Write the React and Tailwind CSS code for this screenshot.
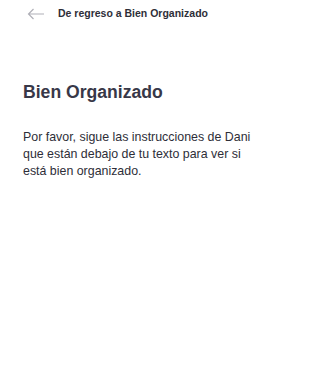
export default function App() {
  return (
    <div className="min-h-screen bg-white font-['Liberation_Sans',Arial,sans-serif]">
      <div className="flex items-center h-[28px] pl-[27px]">
        <svg width="18" height="12" viewBox="0 0 18 12" fill="none" className="text-[#b0b0b8]">
          <path d="M17 6H1.5M6.5 1L1.5 6l5 5" stroke="currentColor" strokeWidth="1.2" />
        </svg>
        <span className="ml-[13px] text-[10.5px] font-bold text-[#2e2e38]">De regreso a Bien Organizado</span>
      </div>
      <div className="px-[23px] pt-[54px]">
        <h1 className="text-[17.6px] font-bold text-[#383848] leading-[20px]">Bien Organizado</h1>
        <p className="mt-[27px] text-[12.4px] leading-[17px] text-[#2e2e38]">
          Por favor, sigue las instrucciones de Dani
          <br />
          que están debajo de tu texto para ver si
          <br />
          está bien organizado.
        </p>
      </div>
    </div>
  );
}
